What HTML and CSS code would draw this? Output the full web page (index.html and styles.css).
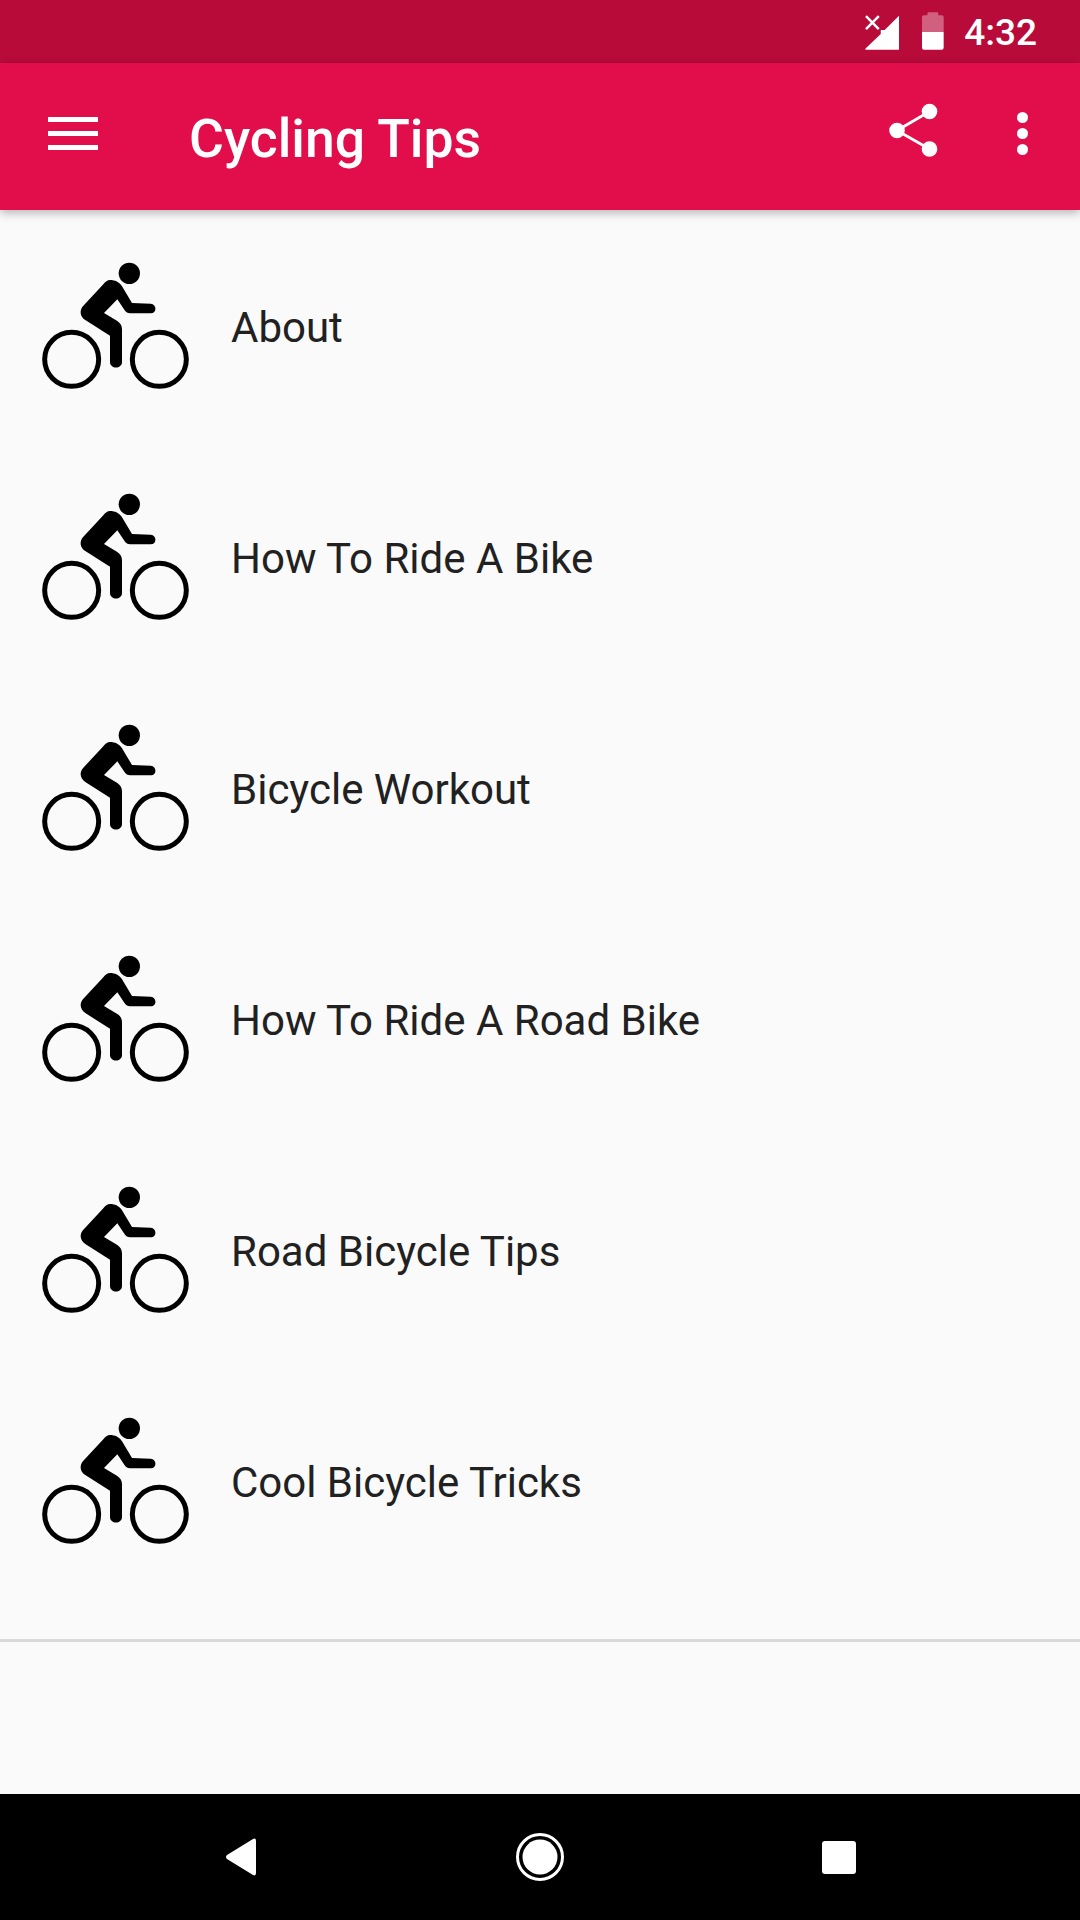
FILE: index.html
```html
<!DOCTYPE html>
<html lang="en">
<head>
  <meta charset="UTF-8">
  <title>Cycling Tips</title>
  <link rel="stylesheet" href="styles.css">
</head>
<body>

  <svg class="sprites" width="0" height="0">
    <symbol id="bike" viewBox="0 0 510 450">
      <circle cx="298" cy="67" r="32"/>
      <path d="M240 87 C255 87 268 93 276 106 L306 156 L362 158 C381 159 381 187 362 187 L300 187 C293 187 288 184 284 178 L262 145 L222 186 L262 210 C271 216 276 224 276 235 L276 333 C276 355 240 355 240 333 L240 254 L167 208 C150 197 147 178 160 164 L220 100 C226 92 232 87 240 87 Z"/>
      <circle cx="125" cy="325" r="81" fill="none" stroke="#000" stroke-width="15"/>
      <circle cx="388" cy="325" r="81" fill="none" stroke="#000" stroke-width="15"/>
    </symbol>
  </svg>

  <div class="status-bar">
    <svg class="signal" width="35" height="35" viewBox="0 0 35 35">
      <path d="M35 0 V33.500 Q35 35 33.500 35 H1.500 Q-0.500 35 0.800 33.500 L16 19 V15 H20 Z" fill="#fff"/>
      <path d="M1 1 L14 14 M14 1 L1 14" stroke="#fff" stroke-width="2.500"/>
    </svg>
    <svg class="battery" width="22" height="38" viewBox="0 0 22 38">
      <path d="M5.500 3 V1 Q5.500 0 6.500 0 H15.500 Q16.500 0 16.500 1 V3 H20 Q22 3 22 5 V20 H0 V5 Q0 3 2 3 Z" fill="#fff" fill-opacity="0.35"/>
      <path d="M0 20 H22 V36 Q22 38 20 38 H2 Q0 38 0 36 Z" fill="#fff"/>
    </svg>
    <span class="clock">4:32</span>
  </div>

  <header class="app-bar">
    <div class="menu-icon"><span></span><span></span><span></span></div>
    <h1 class="title">Cycling Tips</h1>
    <svg class="share-icon" width="50" height="58" viewBox="0 0 50 58" fill="#fff">
      <circle cx="41.500" cy="8.500" r="7.800"/>
      <circle cx="9" cy="27.500" r="7.800"/>
      <circle cx="41.500" cy="46" r="7.800"/>
      <path d="M41.500 8.500 L9 27.500 L41.500 46" fill="none" stroke="#fff" stroke-width="2.800"/>
    </svg>
    <div class="more-icon"><span></span><span></span><span></span></div>
  </header>

  <main class="content">
    <ul class="topics">
      <li class="topic"><svg class="bike"><use href="#bike"/></svg><span class="topic-name">About</span></li>
      <li class="topic"><svg class="bike"><use href="#bike"/></svg><span class="topic-name">How To Ride A Bike</span></li>
      <li class="topic"><svg class="bike"><use href="#bike"/></svg><span class="topic-name">Bicycle Workout</span></li>
      <li class="topic"><svg class="bike"><use href="#bike"/></svg><span class="topic-name">How To Ride A Road Bike</span></li>
      <li class="topic"><svg class="bike"><use href="#bike"/></svg><span class="topic-name">Road Bicycle Tips</span></li>
      <li class="topic"><svg class="bike"><use href="#bike"/></svg><span class="topic-name">Cool Bicycle Tricks</span></li>
    </ul>
    <hr class="divider">
  </main>

  <nav class="nav-bar">
    <svg class="nav-back" width="32" height="38" viewBox="0 0 32 38" fill="#fff">
      <path d="M28 1 Q31 -0.500 31 3 V35 Q31 38.500 28 37 L2 21 Q0 19 2 17 Z"/>
    </svg>
    <svg class="nav-home" width="48" height="48" viewBox="0 0 48 48">
      <circle cx="24" cy="24" r="22.500" fill="none" stroke="#fff" stroke-width="3"/>
      <circle cx="24" cy="24" r="17.500" fill="#fff"/>
    </svg>
    <div class="nav-recent"></div>
  </nav>

</body>
</html>
```

FILE: styles.css
```css
* {
  box-sizing: border-box;
}

html, body {
  margin: 0;
  padding: 0;
}

body {
  width: 1080px;
  height: 1920px;
  display: flex;
  flex-direction: column;
  background: #fafafa;
  font-family: Roboto, sans-serif;
  overflow: hidden;
}

.sprites {
  position: absolute;
}

.status-bar {
  height: 63px;
  flex: none;
  display: flex;
  align-items: flex-start;
  padding: 12px 43px 0 865px;
  background: #b80b3a;
  color: #fff;
}

.signal {
  margin-top: 3px;
}

.battery {
  margin-left: 23px;
}

.clock {
  margin-left: 20px;
  font-size: 37px;
  font-weight: 500;
  line-height: 42px;
}

.app-bar {
  height: 147px;
  flex: none;
  display: flex;
  align-items: center;
  position: relative;
  z-index: 1;
  padding-left: 48px;
  background: #e10e4b;
  box-shadow: 0 3px 9px rgba(0, 0, 0, 0.28);
  color: #fff;
}

.menu-icon {
  width: 50px;
  height: 33px;
  display: flex;
  flex-direction: column;
  justify-content: space-between;
  margin-top: -7px;
}

.menu-icon span {
  height: 5px;
  background: #fff;
}

.title {
  margin: 4px 0 0 91px;
  width: 699px;
  font-size: 53.500px;
  font-weight: 500;
  line-height: 60px;
}

.share-icon {
  margin-top: -9px;
}

.more-icon {
  display: flex;
  flex-direction: column;
  gap: 5px;
  margin-left: 79px;
  margin-top: -7px;
}

.more-icon span {
  width: 11px;
  height: 11px;
  border-radius: 50%;
  background: #fff;
}

.content {
  flex: 1;
}

.topics {
  list-style: none;
  margin: 0;
  padding: 0;
}

.topic {
  height: 231px;
  display: flex;
  align-items: center;
  padding-left: 30px;
  font-size: 42px;
  color: #212121;
}

.topic-name {
  margin-top: 4px;
}

.bike {
  width: 170px;
  height: 150px;
  flex: none;
  margin-right: 31px;
}

.divider {
  height: 3px;
  margin: 43px 0 0;
  border: 0;
  background: #d9d9d9;
}

.nav-bar {
  height: 126px;
  flex: none;
  display: flex;
  align-items: center;
  padding-left: 225px;
  background: #000;
}

.nav-home {
  margin-left: 259px;
}

.nav-recent {
  width: 34px;
  height: 33px;
  margin-left: 258px;
  border-radius: 3px;
  background: #fff;
}
```
